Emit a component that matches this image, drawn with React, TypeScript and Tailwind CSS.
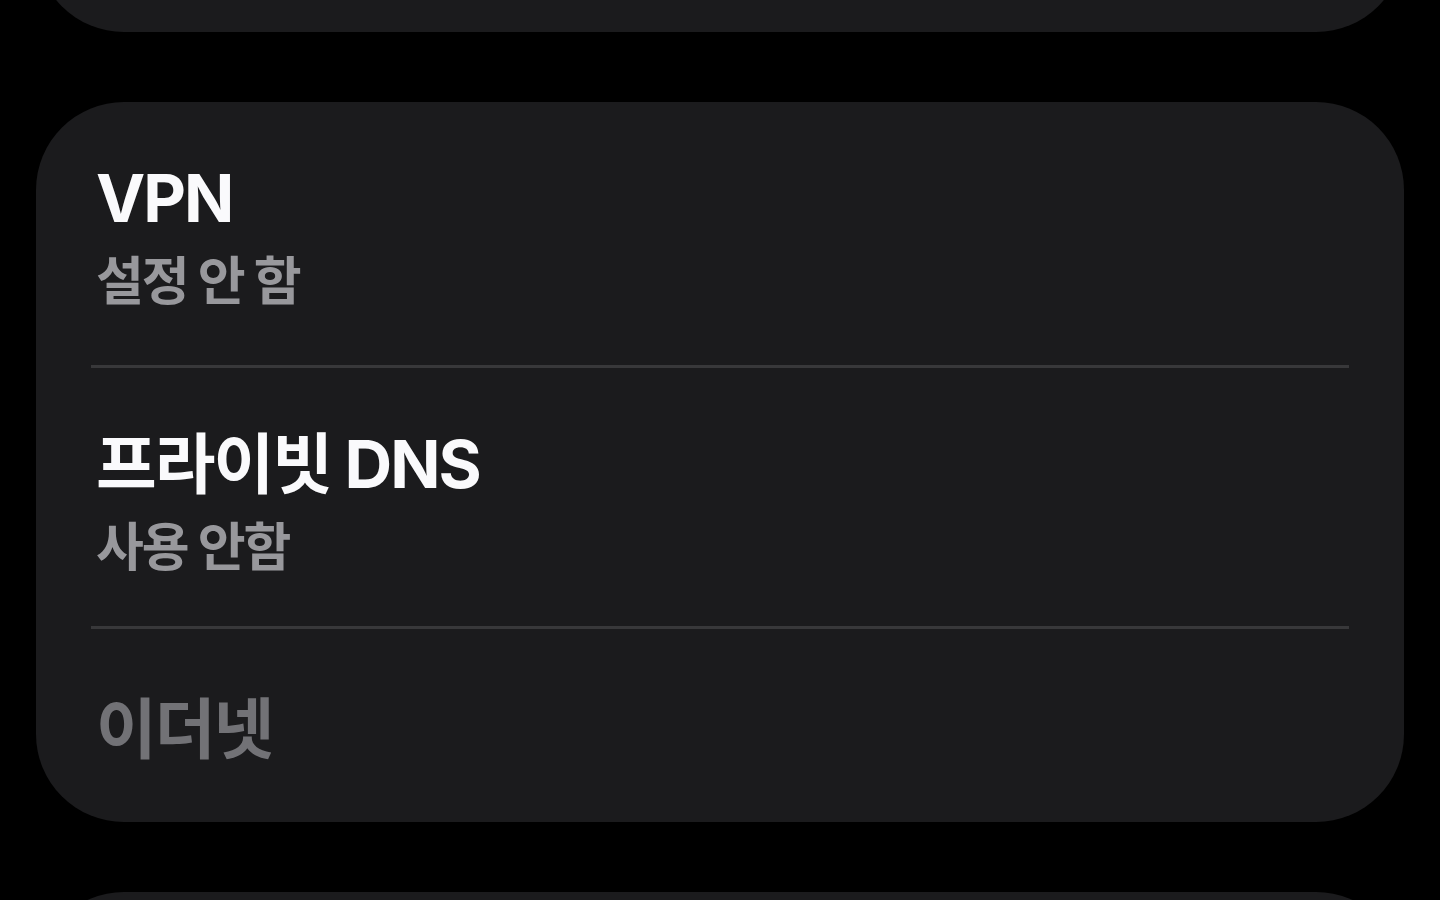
const rows = [
  { title: 'VPN', subtitle: '설정 안 함', disabled: false, box: 'h-[263px] pt-[5px]' },
  { title: '프라이빗 DNS', subtitle: '사용 안함', disabled: false, box: 'h-[258px] pt-[11px]' },
  { title: '이더넷', subtitle: '', disabled: true, box: 'h-[193px] pt-[6px]' },
]

export default function App() {
  return (
    <div
      className="h-screen overflow-hidden bg-black flex flex-col gap-[70px]"
      style={{ fontFamily: 'Inter, "Noto Sans CJK KR", "Noto Sans", sans-serif' }}
    >
      {/* previous card, mostly scrolled off */}
      <div className="mx-[36px] -mt-[168px] h-[200px] shrink-0 rounded-[88px] bg-[#1b1b1d]" />

      {/* network card */}
      <div className="mx-[36px] shrink-0 rounded-[88px] bg-[#1b1b1d] flex flex-col">
        {rows.map((row, i) => (
          <div key={row.title} className="flex flex-col">
            {i > 0 && <div className="mx-[55px] h-[3px] bg-[#38383a]" />}
            <div className={`flex flex-col justify-center px-[60px] ${row.box}`}>
              <div
                className={`text-[66px] font-bold leading-none tracking-[-0.03em] ${
                  row.disabled ? 'text-[#727276]' : 'text-[#fafafc]'
                }`}
              >
                {row.title}
              </div>
              {row.subtitle && (
                <div className="mt-[25px] text-[52px] font-bold leading-none tracking-[-0.04em] text-[#98989c]">
                  {row.subtitle}
                </div>
              )}
            </div>
          </div>
        ))}
      </div>

      {/* next card */}
      <div className="mx-[36px] h-[200px] shrink-0 rounded-[88px] bg-[#1b1b1d]" />
    </div>
  )
}
